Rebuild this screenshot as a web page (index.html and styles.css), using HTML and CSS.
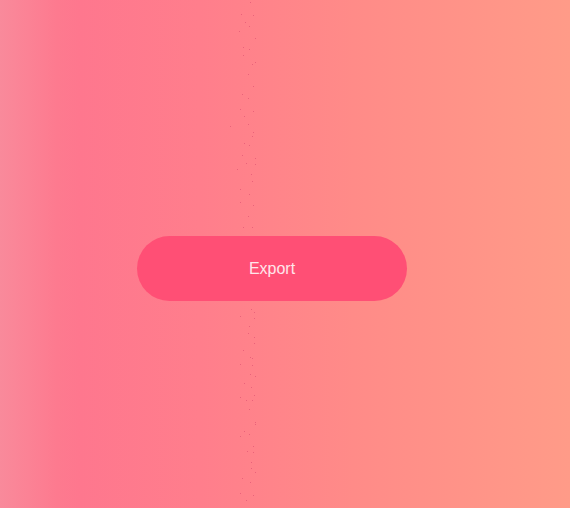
FILE: index.html
```html
<!DOCTYPE html>
<html>
<head>
<meta charset="utf-8">
<link rel="stylesheet" href="styles.css">
</head>
<body>
<main class="stage">
  <svg class="sparkles" width="570" height="508" viewBox="0 0 570 508" aria-hidden="true">
    <g fill="#e9627a">
      <rect x="250" y="2" width="1" height="1"/><rect x="241" y="14" width="1" height="1"/><rect x="253" y="15" width="1" height="1"/>
      <rect x="245" y="22" width="1" height="1"/><rect x="249" y="26" width="1" height="1"/><rect x="239" y="31" width="1" height="1"/>
      <rect x="255" y="38" width="1" height="1"/><rect x="243" y="47" width="1" height="1"/><rect x="249" y="49" width="1" height="1"/>
      <rect x="243" y="55" width="1" height="1"/><rect x="255" y="62" width="1" height="1"/><rect x="252" y="64" width="1" height="1"/>
      <rect x="248" y="74" width="1" height="1"/><rect x="253" y="86" width="1" height="1"/><rect x="242" y="94" width="1" height="1"/>
      <rect x="248" y="98" width="1" height="1"/><rect x="240" y="109" width="1" height="1"/><rect x="253" y="111" width="1" height="1"/>
      <rect x="244" y="116" width="1" height="1"/><rect x="230" y="126" width="1" height="1"/><rect x="248" y="124" width="1" height="1"/>
      <rect x="253" y="132" width="1" height="1"/><rect x="252" y="136" width="1" height="1"/><rect x="244" y="143" width="1" height="1"/>
      <rect x="249" y="145" width="1" height="1"/><rect x="242" y="155" width="1" height="1"/><rect x="246" y="163" width="1" height="1"/>
      <rect x="255" y="158" width="1" height="1"/><rect x="237" y="169" width="1" height="1"/><rect x="255" y="164" width="1" height="1"/>
      <rect x="251" y="174" width="1" height="1"/><rect x="252" y="181" width="1" height="1"/><rect x="240" y="189" width="1" height="1"/>
      <rect x="249" y="194" width="1" height="1"/><rect x="240" y="202" width="1" height="1"/><rect x="253" y="205" width="1" height="1"/>
      <rect x="248" y="216" width="1" height="1"/><rect x="243" y="227" width="1" height="1"/><rect x="252" y="227" width="1" height="1"/>
      <rect x="251" y="309" width="1" height="1"/><rect x="254" y="312" width="1" height="1"/><rect x="240" y="316" width="1" height="1"/>
      <rect x="254" y="318" width="1" height="1"/><rect x="249" y="326" width="1" height="1"/><rect x="248" y="333" width="1" height="1"/>
      <rect x="254" y="337" width="1" height="1"/><rect x="254" y="343" width="1" height="1"/><rect x="243" y="350" width="1" height="1"/>
      <rect x="250" y="357" width="1" height="1"/><rect x="252" y="358" width="1" height="1"/><rect x="240" y="364" width="1" height="1"/>
      <rect x="252" y="365" width="1" height="1"/><rect x="250" y="374" width="1" height="1"/><rect x="255" y="376" width="1" height="1"/>
      <rect x="244" y="383" width="1" height="1"/><rect x="251" y="387" width="1" height="1"/><rect x="254" y="395" width="1" height="1"/>
      <rect x="240" y="397" width="1" height="1"/><rect x="246" y="400" width="1" height="1"/><rect x="252" y="400" width="1" height="1"/>
      <rect x="249" y="409" width="1" height="1"/><rect x="255" y="422" width="1" height="1"/><rect x="255" y="424" width="1" height="1"/>
      <rect x="244" y="431" width="1" height="1"/><rect x="249" y="434" width="1" height="1"/><rect x="240" y="436" width="1" height="1"/>
      <rect x="253" y="446" width="1" height="1"/><rect x="247" y="451" width="1" height="1"/><rect x="253" y="452" width="1" height="1"/>
      <rect x="251" y="462" width="1" height="1"/><rect x="251" y="468" width="1" height="1"/><rect x="255" y="472" width="1" height="1"/>
      <rect x="242" y="478" width="1" height="1"/><rect x="250" y="482" width="1" height="1"/><rect x="240" y="493" width="1" height="1"/>
      <rect x="253" y="495" width="1" height="1"/><rect x="246" y="500" width="1" height="1"/>
    </g>
  </svg>
  <button class="export-btn" type="button">Export</button>
</main>
</body>
</html>
```

FILE: styles.css
```css
html, body {
  margin: 0;
  padding: 0;
  width: 100%;
  height: 100%;
}

body {
  font-family: "Liberation Sans", Arial, sans-serif;
  background: linear-gradient(to right, #f98a9b 0%, #fd7a8f 10%, #fe778e 14%, #ff7e8c 35%, #ff8b88 62%, #ff9b88 100%);
  overflow: hidden;
}

.stage {
  position: relative;
  width: 570px;
  height: 508px;
  display: flex;
  align-items: flex-start;
  justify-content: flex-start;
  box-sizing: border-box;
  padding-left: 137px;
  padding-top: 236px;
}

.sparkles {
  position: absolute;
  left: 0;
  top: 0;
  pointer-events: none;
}

.export-btn {
  position: relative;
  width: 270px;
  height: 65px;
  border: none;
  border-radius: 33px;
  background: #ff4f75;
  color: #ffe6ea;
  font-family: "Liberation Sans", Arial, sans-serif;
  font-size: 16px;
  padding: 0;
  cursor: pointer;
}
```
